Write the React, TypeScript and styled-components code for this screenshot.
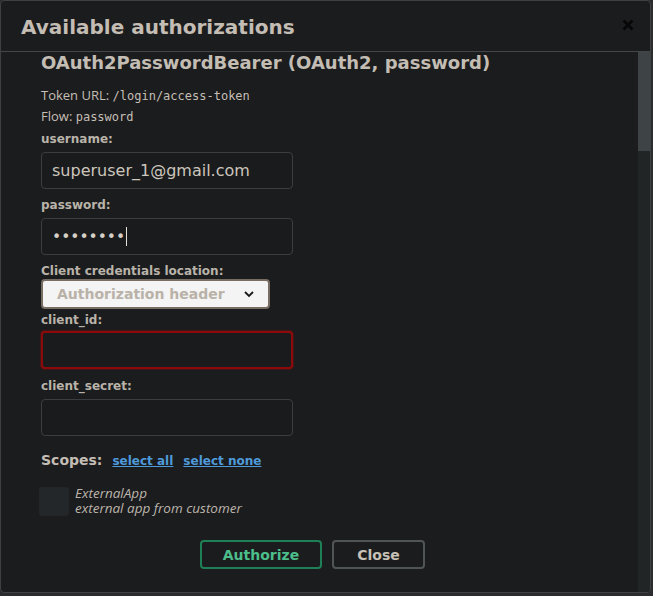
import React from 'react';
import styled, { createGlobalStyle, css } from 'styled-components';

const GlobalStyle = createGlobalStyle`
	html, body {
		margin: 0;
		padding: 0;
		background: #2a2c2e;
	}
	body {
		font-family: 'DejaVu Sans', sans-serif;
	}
`;

const Modal = styled.div`
	box-sizing: border-box;
	width: 651px;
	height: 593px;
	border: 1px solid #3e4143;
	border-radius: 4px;
	background: #1b1c1e;
	display: flex;
	flex-direction: column;
	overflow: hidden;
`;

const Header = styled.div`
	height: 50px;
	flex: none;
	display: flex;
	align-items: center;
	justify-content: space-between;
	padding: 0 15px 0 20px;
	border-bottom: 1px solid #43474a;
`;

const Title = styled.h3`
	margin: 0;
	font-size: 20px;
	font-weight: 700;
	color: #c3bdb3;
	padding-top: 1px;
`;

const CloseIcon = styled.button`
	border: 0;
	background: none;
	padding: 0;
	width: 14px;
	height: 14px;
	display: flex;
	margin-bottom: 3px;
`;

const Body = styled.div`
	flex: 1;
	display: flex;
	min-height: 0;
`;

const Content = styled.div`
	flex: 1;
	padding: 0 40px;
`;

const Track = styled.div`
	width: 12px;
	flex: none;
	background: #212526;
`;

const Thumb = styled.div`
	height: 99px;
	background: #3e4446;
`;

const Heading = styled.h4`
	margin: 0;
	font-size: 18px;
	font-weight: 700;
	line-height: 22px;
	color: #c3bdb3;
`;

const Meta = styled.p`
	margin: 0;
	font-family: 'Open Sans', sans-serif;
	font-size: 13px;
	line-height: 20px;
	color: #c5bfb5;
	code {
		font-family: 'DejaVu Sans Mono', monospace;
		font-size: 12px;
	}
`;

const MetaBlock = styled.div`
	margin-top: 11px;
	margin-bottom: 4px;
`;

const Label = styled.label<{ $gap?: number }>`
	display: block;
	font-size: 12px;
	font-weight: 700;
	line-height: 16px;
	color: #b9b3a9;
	margin-bottom: ${p => p.$gap ?? 5}px;
`;

const Input = styled.div<{ $invalid?: boolean }>`
	box-sizing: border-box;
	width: 252px;
	height: 37px;
	border-radius: 4px;
	border: 1px solid #3b3e41;
	background: #1a1b1d;
	display: flex;
	align-items: center;
	padding: 0 10px;
	font-size: 16px;
	color: #ccc6bc;
	margin-bottom: 8px;
	${p =>
		p.$invalid &&
		css`
			height: 38px;
			margin-bottom: 9px;
			border: 2px solid #8d0a0a;
			box-shadow: 0 0 2px #a00c0c;
		`}
`;

const Dots = styled.span`
	font-size: 15.5px;
	color: #d5cfc5;
`;

const Caret = styled.span`
	display: inline-block;
	width: 1px;
	height: 19px;
	background: #e6e0d6;
	margin-left: 1px;
`;

const Select = styled.div`
	box-sizing: border-box;
	width: 229px;
	height: 30px;
	border: 2px solid #776d62;
	border-radius: 4px;
	background: #f4f4f4;
	display: flex;
	align-items: center;
	justify-content: space-between;
	padding: 0 13px 0 14px;
	font-size: 14px;
	font-weight: 700;
	color: #b9b2a8;
	margin-bottom: 3px;
`;

const ScopesRow = styled.div`
	display: flex;
	align-items: baseline;
	gap: 10px;
	margin-top: 16px;
`;

const ScopesTitle = styled.span`
	font-size: 14px;
	font-weight: 700;
	color: #c3bdb3;
`;

const LinkButton = styled.a`
	font-size: 12px;
	font-weight: 700;
	color: #4e9ada;
	text-decoration: underline;
	cursor: pointer;
`;

const ScopeItem = styled.div`
	display: flex;
	align-items: center;
	gap: 6px;
	margin-top: 19px;
	margin-left: -2px;
`;

const CheckBox = styled.span`
	width: 30px;
	height: 29px;
	border-radius: 3px;
	background: #23272a;
	flex: none;
`;

const ScopeText = styled.div`
	font-family: 'Open Sans', sans-serif;
	font-style: italic;
	font-size: 13.5px;
	line-height: 15px;
	color: #bbb5ab;
	margin-top: -1px;
`;

const Buttons = styled.div`
	display: flex;
	justify-content: center;
	gap: 10px;
	margin-top: 24px;
	padding-right: 14px;
`;

const Button = styled.button<{ $primary?: boolean }>`
	box-sizing: border-box;
	height: 29px;
	border-radius: 4px;
	background: transparent;
	font-family: 'DejaVu Sans', sans-serif;
	font-size: 14px;
	font-weight: 700;
	border: 2px solid ${p => (p.$primary ? '#1f7f56' : '#4f5457')};
	color: ${p => (p.$primary ? '#4cbe8b' : '#c6c0b6')};
	width: ${p => (p.$primary ? 122 : 93)}px;
`;

export default function App() {
	return (
		<>
			<GlobalStyle />
			<Modal>
				<Header>
					<Title>Available authorizations</Title>
					<CloseIcon aria-label="Close">
						<svg width="14" height="14" viewBox="0 0 14 14">
							<path d="M2.5 2.5L11.5 11.5M11.5 2.5L2.5 11.5" stroke="#070707" strokeWidth="2.6" />
						</svg>
					</CloseIcon>
				</Header>
				<Body>
					<Content>
						<Heading>OAuth2PasswordBearer (OAuth2, password)</Heading>
						<MetaBlock>
							<Meta>
								Token URL: <code>/login/access-token</code>
							</Meta>
							<Meta>
								Flow: <code>password</code>
							</Meta>
						</MetaBlock>
						<Label>username:</Label>
						<Input>superuser_1@gmail.com</Input>
						<Label>password:</Label>
						<Input>
							<Dots>••••••••</Dots>
							<Caret />
						</Input>
						<Label $gap={0}>Client credentials location:</Label>
						<Select>
							<span>Authorization header</span>
							<svg width="12" height="8" viewBox="0 0 12 8">
								<path d="M2 2l4 4 4-4" stroke="#1a1a1a" strokeWidth="1.8" fill="none" />
							</svg>
						</Select>
						<Label $gap={3}>client_id:</Label>
						<Input $invalid />
						<Label>client_secret:</Label>
						<Input />
						<ScopesRow>
							<ScopesTitle>Scopes:</ScopesTitle>
							<LinkButton>select all</LinkButton>
							<LinkButton>select none</LinkButton>
						</ScopesRow>
						<ScopeItem>
							<CheckBox />
							<ScopeText>
								<div>ExternalApp</div>
								<div>external app from customer</div>
							</ScopeText>
						</ScopeItem>
						<Buttons>
							<Button $primary>Authorize</Button>
							<Button>Close</Button>
						</Buttons>
					</Content>
					<Track>
						<Thumb />
					</Track>
				</Body>
			</Modal>
		</>
	);
}
